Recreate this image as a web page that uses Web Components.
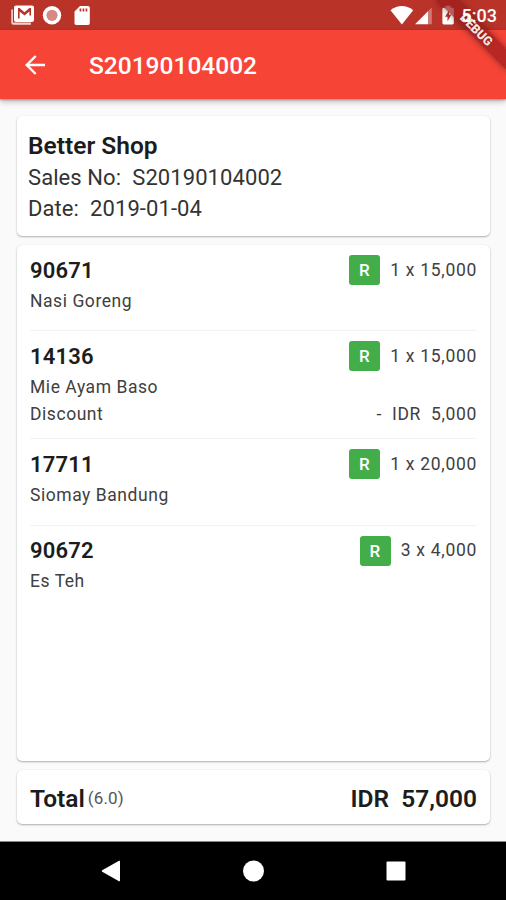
<!DOCTYPE html>
<html lang="en">
<head>
<meta charset="utf-8">
<title>S20190104002</title>
<style>
  body {
    margin: 0;
    background: #fafafa;
    font-family: Roboto, sans-serif;
    color: #1c1c1c;
  }
</style>
</head>
<body>
<sales-screen></sales-screen>

<script>
function define(name, html) {
  customElements.define(name, class extends HTMLElement {
    constructor() {
      super();
      this.attachShadow({ mode: "open" }).innerHTML = html;
    }
  });
}

define("status-bar", `
  <style>
    :host {
      display: flex;
      align-items: center;
      height: 30px;
      box-sizing: border-box;
      background: #b93329;
      color: #fff;
    }
    svg { display: block; fill: #fff; }
    .clock {
      position: absolute;
      right: 9px;
      top: 5px;
      z-index: 2;
      font-size: 18px;
      line-height: 22px;
      font-weight: 500;
    }
  </style>
  <svg width="506" height="30" viewBox="0 0 506 30">
    <path d="M11.3 9.5h1.6v13h18v2.2H13.3q-2 0-2-2z" opacity=".8"/>
    <path fill-rule="evenodd" d="M16 5.500h16q2 0 2 2v12.500q0 2-2 2H16q-2 0-2-2V7.500q0-2 2-2zM18 8v10.500h1.600v-7l4.900 4 4.900-4v4h1.600V8h-1.600l-4.900 4.300L19.600 8z"/>
    <circle cx="52" cy="15.300" r="9.200"/>
    <circle cx="52" cy="15.300" r="5.600" fill="#d58a85"/>
    <path fill-rule="evenodd" d="M80 6h8q1.800 0 1.800 1.800v15.400q0 1.800-1.800 1.800H76.300q-1.800 0-1.800-1.800V11.500zM79.600 8.500v3h1.700v-3zm3 0v3h1.700v-3zm3 0v3h1.700v-3z"/>
    <path d="M390.500 10.200Q402 2 413.200 10.200L401.900 24.500z"/>
    <path d="M428 11.200v13.100H415z"/>
    <path d="M428 11.200l3.800-3.700v16.800H428z" opacity=".35"/>
    <path fill-rule="evenodd" d="M445.500 5.800h5v1.900h1.900q1.400 0 1.400 1.400v14q0 1.400-1.400 1.400h-8.600q-1.400 0-1.400-1.400v-14q0-1.400 1.400-1.400h1.700zM449 10.500l-4 6.200h2.500v4.600l3.900-6.500H449z"/>
  </svg>
  <span class="clock">5:03</span>
`);

define("app-bar", `
  <style>
    :host {
      display: flex;
      align-items: center;
      height: 69px;
      box-sizing: border-box;
      padding-left: 25px;
      background: #f64537;
      color: #fff;
      box-shadow: 0 1px 2px rgba(0, 0, 0, .3), 0 3px 6px rgba(0, 0, 0, .22);
    }
    svg { flex: none; }
    h1 {
      margin: 2px 0 0 44px;
      font-size: 24.500px;
      font-weight: 500;
      line-height: 30px;
    }
  </style>
  <svg width="20" height="20" viewBox="0 0 20 20" fill="none" stroke="#fff" stroke-width="2.400"><path d="M20 10H2M10.700 1L1.700 10l9 9"/></svg>
  <h1><slot></slot></h1>
`);

define("debug-banner", `
  <style>
    :host {
      position: absolute;
      top: 0;
      right: 0;
      width: 90px;
      height: 90px;
      overflow: hidden;
      pointer-events: none;
    }
    div {
      position: absolute;
      left: 11px;
      top: 22px;
      width: 99px;
      height: 15px;
      transform: rotate(45deg);
      background: rgba(160, 28, 28, .72);
      box-shadow: 0 0 7px rgba(0, 0, 0, .4);
      color: #f6e4e3;
      text-align: center;
      font-size: 12.500px;
      font-weight: 900;
      line-height: 15px;
      text-shadow: 0 0 3px rgba(0, 0, 0, .4);
    }
  </style>
  <div><slot></slot></div>
`);

define("paper-card", `
  <style>
    :host {
      display: block;
      box-sizing: border-box;
      background: #fff;
      border-radius: 5px;
      box-shadow: 0 1px 2px rgba(0, 0, 0, .3), 0 0 1px rgba(0, 0, 0, .08);
    }
  </style>
  <slot></slot>
`);

define("shop-info", `
  <style>
    :host { display: block; padding: 14px 11px 0; font-size: 22px; line-height: 31px; letter-spacing: .08px; }
    h2 { margin: 0; font-size: 24.500px; line-height: 32px; font-weight: 600; letter-spacing: 0; }
    p { margin: 0; white-space: pre; color: #333; }
  </style>
  <h2><slot name="name"></slot></h2>
  <p>Sales No:  <slot name="number"></slot></p>
  <p>Date:  <slot name="date"></slot></p>
`);

define("unit-badge", `
  <style>
    :host {
      display: block;
      width: 31px;
      height: 30px;
      border-radius: 3px;
      background: #43ad49;
      color: #fff;
      font-size: 17px;
      font-weight: 500;
      line-height: 31px;
      text-align: center;
    }
  </style>
  <slot></slot>
`);

define("sales-item", `
  <style>
    :host {
      display: block;
      height: 86.200px;
      box-sizing: border-box;
      padding-top: 10px;
      border-bottom: 1px solid #f3f3f3;
      color: #404040;
      font-size: 17.500px;
      letter-spacing: .55px;
      line-height: 27px;
    }
    :host([tall]) { height: 108.300px; }
    :host(:last-child) { border: 0; }
    .row { display: flex; align-items: center; justify-content: space-between; }
    .head { height: 30px; }
    .code { font-size: 22px; font-weight: 600; color: #1c1c1c; letter-spacing: .2px; }
    .amount { display: flex; align-items: center; gap: 10px; letter-spacing: .7px; }
    .name { margin-top: 2.500px; }
  </style>
  <div class="row head">
    <span class="code"><slot name="code"></slot></span>
    <span class="amount"><unit-badge>R</unit-badge><slot name="amount"></slot></span>
  </div>
  <div class="name"><slot></slot></div>
  <slot name="discount"></slot>
`);

define("discount-line", `
  <style>
    :host { display: flex; justify-content: space-between; }
    .value { white-space: pre; letter-spacing: .65px; }
  </style>
  <span>Discount</span><span class="value"><slot></slot></span>
`);

define("total-line", `
  <style>
    :host {
      display: flex;
      align-items: center;
      height: 54px;
      padding: 2px 13px 0;
      box-sizing: border-box;
      font-size: 24.500px;
      font-weight: 600;
    }
    small { margin-left: 3px; font-size: 17px; font-weight: 400; color: #555; letter-spacing: .1px; }
    .sum { margin-left: auto; white-space: pre; }
  </style>
  <span>Total</span><small><slot name="count"></slot></small><span class="sum"><slot></slot></span>
`);

define("nav-bar", `
  <style>
    :host {
      display: flex;
      align-items: center;
      justify-content: space-between;
      height: 59px;
      box-sizing: border-box;
      padding: 0 99px 0 101px;
      background: #000;
      border-top: 1px solid #888;
    }
    svg { fill: #fff; }
  </style>
  <svg width="22" height="22" viewBox="0 0 22 22"><path d="M1.200 11.700q-1-.7 0-1.400L18 .800q1-.5 1 .6v19.200q0 1.100-1 .6z"/></svg>
  <svg width="22" height="22" viewBox="0 0 22 22"><circle cx="10.500" cy="11" r="10.500"/></svg>
  <svg width="22" height="22" viewBox="0 0 22 22"><rect x="1.500" y="1.500" width="19" height="19" rx="1"/></svg>
`);

define("sales-screen", `
  <style>
    :host {
      display: flex;
      flex-direction: column;
      position: relative;
      width: 506px;
      height: 900px;
      overflow: hidden;
    }
    main {
      flex: 1;
      display: flex;
      flex-direction: column;
      gap: 9px;
      padding: 17px 16px 17px 17px;
    }
    .info { height: 120px; }
    .items { flex: 1; padding: 0 13px; }
  </style>
  <status-bar></status-bar>
  <app-bar>S20190104002</app-bar>
  <debug-banner>DEBUG</debug-banner>
  <main>
    <paper-card class="info">
      <shop-info>
        <span slot="name">Better Shop</span>
        <span slot="number">S20190104002</span>
        <span slot="date">2019-01-04</span>
      </shop-info>
    </paper-card>
    <paper-card class="items">
      <sales-item><span slot="code">90671</span>Nasi Goreng<span slot="amount">1 x 15,000</span></sales-item>
      <sales-item tall>
        <span slot="code">14136</span>Mie Ayam Baso<span slot="amount">1 x 15,000</span>
        <discount-line slot="discount">-  IDR  5,000</discount-line>
      </sales-item>
      <sales-item><span slot="code">17711</span>Siomay Bandung<span slot="amount">1 x 20,000</span></sales-item>
      <sales-item><span slot="code">90672</span>Es Teh<span slot="amount">3 x 4,000</span></sales-item>
    </paper-card>
    <paper-card>
      <total-line><span slot="count">(6.0)</span>IDR  57,000</total-line>
    </paper-card>
  </main>
  <nav-bar></nav-bar>
`);
</script>
</body>
</html>
